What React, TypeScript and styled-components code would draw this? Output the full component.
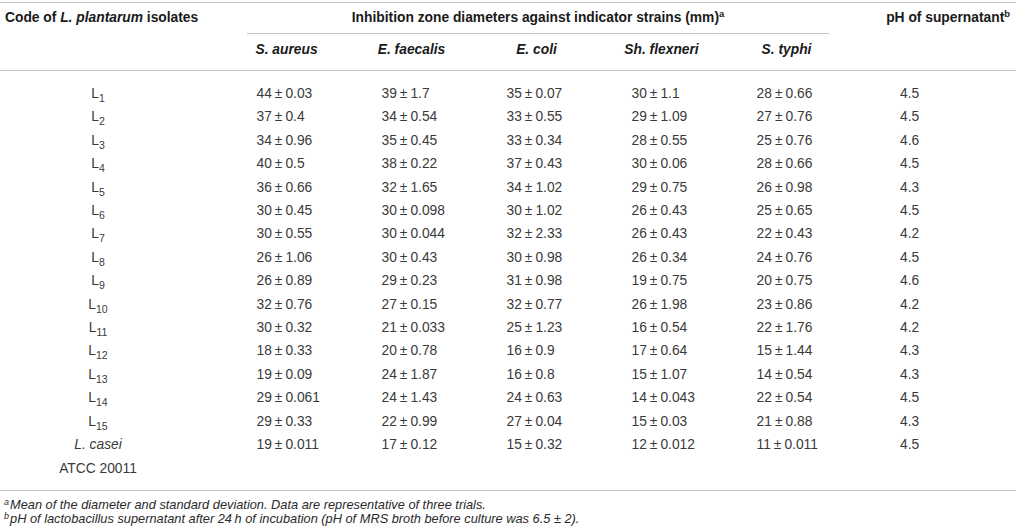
import React from 'react';
import styled, { createGlobalStyle } from 'styled-components';

const GlobalStyle = createGlobalStyle`
  html, body {
    margin: 0;
    padding: 0;
    background: #fff;
  }
  body {
    font-family: 'Liberation Sans', Arial, Helvetica, sans-serif;
  }
`;

type Row = {
  code: React.ReactNode;
  values: string[];
  ph: string;
};

const raw: [string, string[], string][] = [
  ['1', ['44|0.03', '39|1.7', '35|0.07', '30|1.1', '28|0.66'], '4.5'],
  ['2', ['37|0.4', '34|0.54', '33|0.55', '29|1.09', '27|0.76'], '4.5'],
  ['3', ['34|0.96', '35|0.45', '33|0.34', '28|0.55', '25|0.76'], '4.6'],
  ['4', ['40|0.5', '38|0.22', '37|0.43', '30|0.06', '28|0.66'], '4.5'],
  ['5', ['36|0.66', '32|1.65', '34|1.02', '29|0.75', '26|0.98'], '4.3'],
  ['6', ['30|0.45', '30|0.098', '30|1.02', '26|0.43', '25|0.65'], '4.5'],
  ['7', ['30|0.55', '30|0.044', '32|2.33', '26|0.43', '22|0.43'], '4.2'],
  ['8', ['26|1.06', '30|0.43', '30|0.98', '26|0.34', '24|0.76'], '4.5'],
  ['9', ['26|0.89', '29|0.23', '31|0.98', '19|0.75', '20|0.75'], '4.6'],
  ['10', ['32|0.76', '27|0.15', '32|0.77', '26|1.98', '23|0.86'], '4.2'],
  ['11', ['30|0.32', '21|0.033', '25|1.23', '16|0.54', '22|1.76'], '4.2'],
  ['12', ['18|0.33', '20|0.78', '16|0.9', '17|0.64', '15|1.44'], '4.3'],
  ['13', ['19|0.09', '24|1.87', '16|0.8', '15|1.07', '14|0.54'], '4.3'],
  ['14', ['29|0.061', '24|1.43', '24|0.63', '14|0.043', '22|0.54'], '4.5'],
  ['15', ['29|0.33', '22|0.99', '27|0.04', '15|0.03', '21|0.88'], '4.3'],
];

const rows: Row[] = [
  ...raw.map(([n, values, ph]) => ({
    code: (
      <>
        L<sub>{n}</sub>
      </>
    ),
    values,
    ph,
  })),
  {
    code: <i>L. casei</i>,
    values: ['19|0.011', '17|0.12', '15|0.32', '12|0.012', '11|0.011'],
    ph: '4.5',
  },
  { code: 'ATCC 20011', values: ['', '', '', '', ''], ph: '' },
];

const strains = ['S. aureus', 'E. faecalis', 'E. coli', 'Sh. flexneri', 'S. typhi'];

const Value = ({ v }: { v: string }) => {
  if (!v) return null;
  const [mean, sd] = v.split('|');
  return (
    <ValueBox>
      {mean}
      <Pm>±</Pm>
      {sd}
    </ValueBox>
  );
};

const App = () => {
  return (
    <>
      <GlobalStyle />
      <Page>
        <Table>
          <colgroup>
            <col style={{ width: 224 }} />
            <col style={{ width: 125 }} />
            <col style={{ width: 125 }} />
            <col style={{ width: 125 }} />
            <col style={{ width: 125 }} />
            <col style={{ width: 125 }} />
            <col style={{ width: 167 }} />
          </colgroup>
          <thead>
            <TopRow>
              <CodeHead>
                Code of <i>L. plantarum</i> isolates
              </CodeHead>
              <SpanHead colSpan={5}>
                <SpanLabel>
                  Inhibition zone diameters against indicator strains (mm)<sup>a</sup>
                </SpanLabel>
              </SpanHead>
              <PhHead>
                pH of supernatant<sup>b</sup>
              </PhHead>
            </TopRow>
            <SubRow>
              <SubHead />
              {strains.map(s => (
                <SubHead key={s}>
                  <i>{s}</i>
                </SubHead>
              ))}
              <SubHead />
            </SubRow>
          </thead>
          <tbody>
            {rows.map((r, i) => (
              <BodyRow key={i}>
                <CodeCell>{r.code}</CodeCell>
                {r.values.map((v, j) => (
                  <DataCell key={j}>
                    <Value v={v} />
                  </DataCell>
                ))}
                <PhCell>{r.ph}</PhCell>
              </BodyRow>
            ))}
          </tbody>
        </Table>
        <Notes>
          <Note>
            <sup>a</sup>Mean of the diameter and standard deviation. Data are representative of three trials.
          </Note>
          <Note>
            <sup>b</sup>pH of lactobacillus supernatant after 24&#8201;h of incubation (pH of MRS broth before culture
            was 6.5 ± 2).
          </Note>
        </Notes>
      </Page>
    </>
  );
};

export default App;

const Page = styled.div`
  width: 1016px;
  height: 529px;
  padding-top: 2px;
  box-sizing: border-box;
  overflow: hidden;
  background: #fff;
`;

const Table = styled.table`
  width: 1016px;
  table-layout: fixed;
  border-collapse: collapse;
  border-top: 1.5px solid #c4c4c4;
  border-bottom: 1.5px solid #c4c4c4;
  font-size: 13.8px;

  sup {
    font-size: 9.5px;
    vertical-align: 5px;
    line-height: 0;
  }
`;

const TopRow = styled.tr`
  height: 31px;
`;

const HeadBase = styled.th`
  padding: 0;
  font-weight: bold;
  color: #1a1a1a;
  white-space: nowrap;
  line-height: 16px;
`;

const CodeHead = styled(HeadBase)`
  text-align: left;
  padding-left: 5px;
  vertical-align: middle;
`;

const SpanHead = styled(HeadBase)`
  text-align: center;
  vertical-align: bottom;
`;

const SpanLabel = styled.div`
  margin: 0 20px 0 23px;
  padding: 0 0 7px;
  border-bottom: 1.5px solid #c4c4c4;
`;

const PhHead = styled(HeadBase)`
  text-align: right;
  padding-right: 6px;
  vertical-align: middle;
`;

const SubRow = styled.tr`
  height: 37px;
`;

const SubHead = styled(HeadBase)`
  text-align: center;
  vertical-align: top;
  padding-top: 8px;
  border-bottom: 1.5px solid #c4c4c4;
`;

const BodyRow = styled.tr`
  height: 23.4px;

  &:first-child td {
    padding-top: 11px;
  }

  &:last-child td {
    padding-bottom: 10px;
  }
`;

const BodyCell = styled.td`
  padding: 0;
  color: #3a3a3a;
  line-height: 23.4px;
  white-space: nowrap;
  vertical-align: middle;

  sub {
    font-size: 10.5px;
    vertical-align: -4px;
    line-height: 0;
  }
`;

const CodeCell = styled(BodyCell)`
  text-align: center;
  padding-right: 28px;
`;

const DataCell = styled(BodyCell)`
  text-align: center;
`;

const PhCell = styled(BodyCell)`
  padding-left: 51px;
`;

const ValueBox = styled.span`
  display: inline-block;
  width: 60px;
  text-align: left;
`;

const Pm = styled.span`
  margin: 0 3px;
`;

const Notes = styled.div`
  padding: 7px 0 0 4px;
`;

const Note = styled.div`
  font-size: 12.8px;
  font-style: italic;
  line-height: 14.5px;
  color: #2a2a2a;
  white-space: nowrap;

  sup {
    font-size: 9px;
    vertical-align: 4px;
    line-height: 0;
    margin-right: 1px;
  }
`;
